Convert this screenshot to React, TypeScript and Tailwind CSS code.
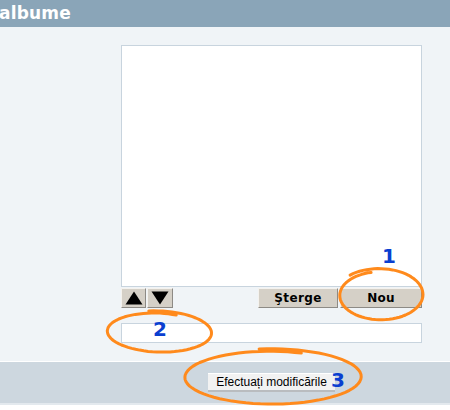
import React from 'react'

// hand-drawn marker loop, a bit more than one full turn
function loop(cx: number, cy: number, rx: number, ry: number, start: number, extra: number, drift: number, tilt = 0) {
  const pts: string[] = []
  const steps = 80
  const total = Math.PI * 2 + extra
  for (let i = 0; i <= steps; i++) {
    const t = i / steps
    const a = start + total * t
    const k = 1 + drift * (0.5 - t)
    const x0 = Math.cos(a) * rx * k
    const y0 = Math.sin(a) * ry * k
    const x = cx + x0 * Math.cos(tilt) - y0 * Math.sin(tilt)
    const y = cy + x0 * Math.sin(tilt) + y0 * Math.cos(tilt)
    pts.push(`${i === 0 ? 'M' : 'L'}${x.toFixed(1)} ${y.toFixed(1)}`)
  }
  return pts.join(' ')
}

function Triangle({ up }: { up: boolean }) {
  return (
    <svg width="18" height="14" viewBox="0 0 18 14">
      <path d={up ? 'M9 0.5 L17.5 13.5 L0.5 13.5 Z' : 'M0.5 0.5 L17.5 0.5 L9 13.5 Z'} fill="#000" />
    </svg>
  )
}

const btn =
  'h-[20px] flex items-center justify-center bg-[#d5d0c7] border-t border-l border-t-[#f4f2ee] border-l-[#f4f2ee] border-b border-r border-b-[#8d8a85] border-r-[#8d8a85]'

export default function App() {
  return (
    <div className="relative w-[450px] h-[410px] bg-white overflow-hidden" style={{ fontFamily: '"DejaVu Sans", Verdana, sans-serif' }}>
      {/* title bar */}
      <div className="h-[27px] bg-[#8aa5b8] flex items-center">
        <span className="text-white font-bold text-[17px] leading-none -ml-px tracking-[0.2px]">albume</span>
      </div>

      {/* body */}
      <div className="bg-[#f0f4f7] pt-[18px] pb-[18px] pl-[121px] pr-[28px]">
        <div className="h-[242px] bg-white border border-[#c8d4de]" />
        <div className="flex items-center mt-px">
          <div className="flex gap-px">
            <div className={`${btn} w-[25px]`}><Triangle up /></div>
            <div className={`${btn} w-[26px]`}><Triangle up={false} /></div>
          </div>
          <div className="ml-auto flex gap-[2px]">
            <div className={`${btn} w-[80px] text-[12px] font-bold text-black tracking-[0.4px]`}>Şterge</div>
            <div className={`${btn} w-[82px] text-[12px] font-bold text-black tracking-[0.3px]`}>Nou</div>
          </div>
        </div>
        <div className="mt-[15px] h-[20px] bg-white border border-[#c8d4de]" />
      </div>

      {/* footer bar */}
      <div className="h-[44px] bg-[#cdd7df] border-t border-t-white border-b-2 border-b-[#e3e9ee] pl-[121px] pr-[28px] flex items-center justify-center">
        <div
          className="h-[19px] px-[8px] flex items-center bg-[#f2f2f2] border-b-2 border-b-[#b9bcbf] border-t border-t-white text-[12px] text-black"
          style={{ fontFamily: '"Liberation Sans", Arial, sans-serif' }}
        >
          Efectuați modificările
        </div>
      </div>

      {/* annotations */}
      <svg className="absolute inset-0 pointer-events-none" width="450" height="410" viewBox="0 0 450 410">
        <g fill="none" stroke="#ff8a1c" strokeWidth="3" strokeLinecap="round" strokeLinejoin="round">
          <path d={loop(380, 295, 42, 25, -2.3, 0.5, 0.14)} />
          <path d={loop(158, 332, 52, 20, -1.75, 0.55, 0.12, 0.03)} />
          <path d={loop(271, 377, 88, 27, -1.7, 0.5, 0.1)} />
        </g>
      </svg>
      <span className="absolute left-[382px] top-[246px] text-[20px] font-bold text-[#0a3fd0] leading-none">1</span>
      <span className="absolute left-[153px] top-[319px] text-[20px] font-bold text-[#0a3fd0] leading-none">2</span>
      <span className="absolute left-[331px] top-[370px] text-[20px] font-bold text-[#0a3fd0] leading-none">3</span>
    </div>
  )
}
